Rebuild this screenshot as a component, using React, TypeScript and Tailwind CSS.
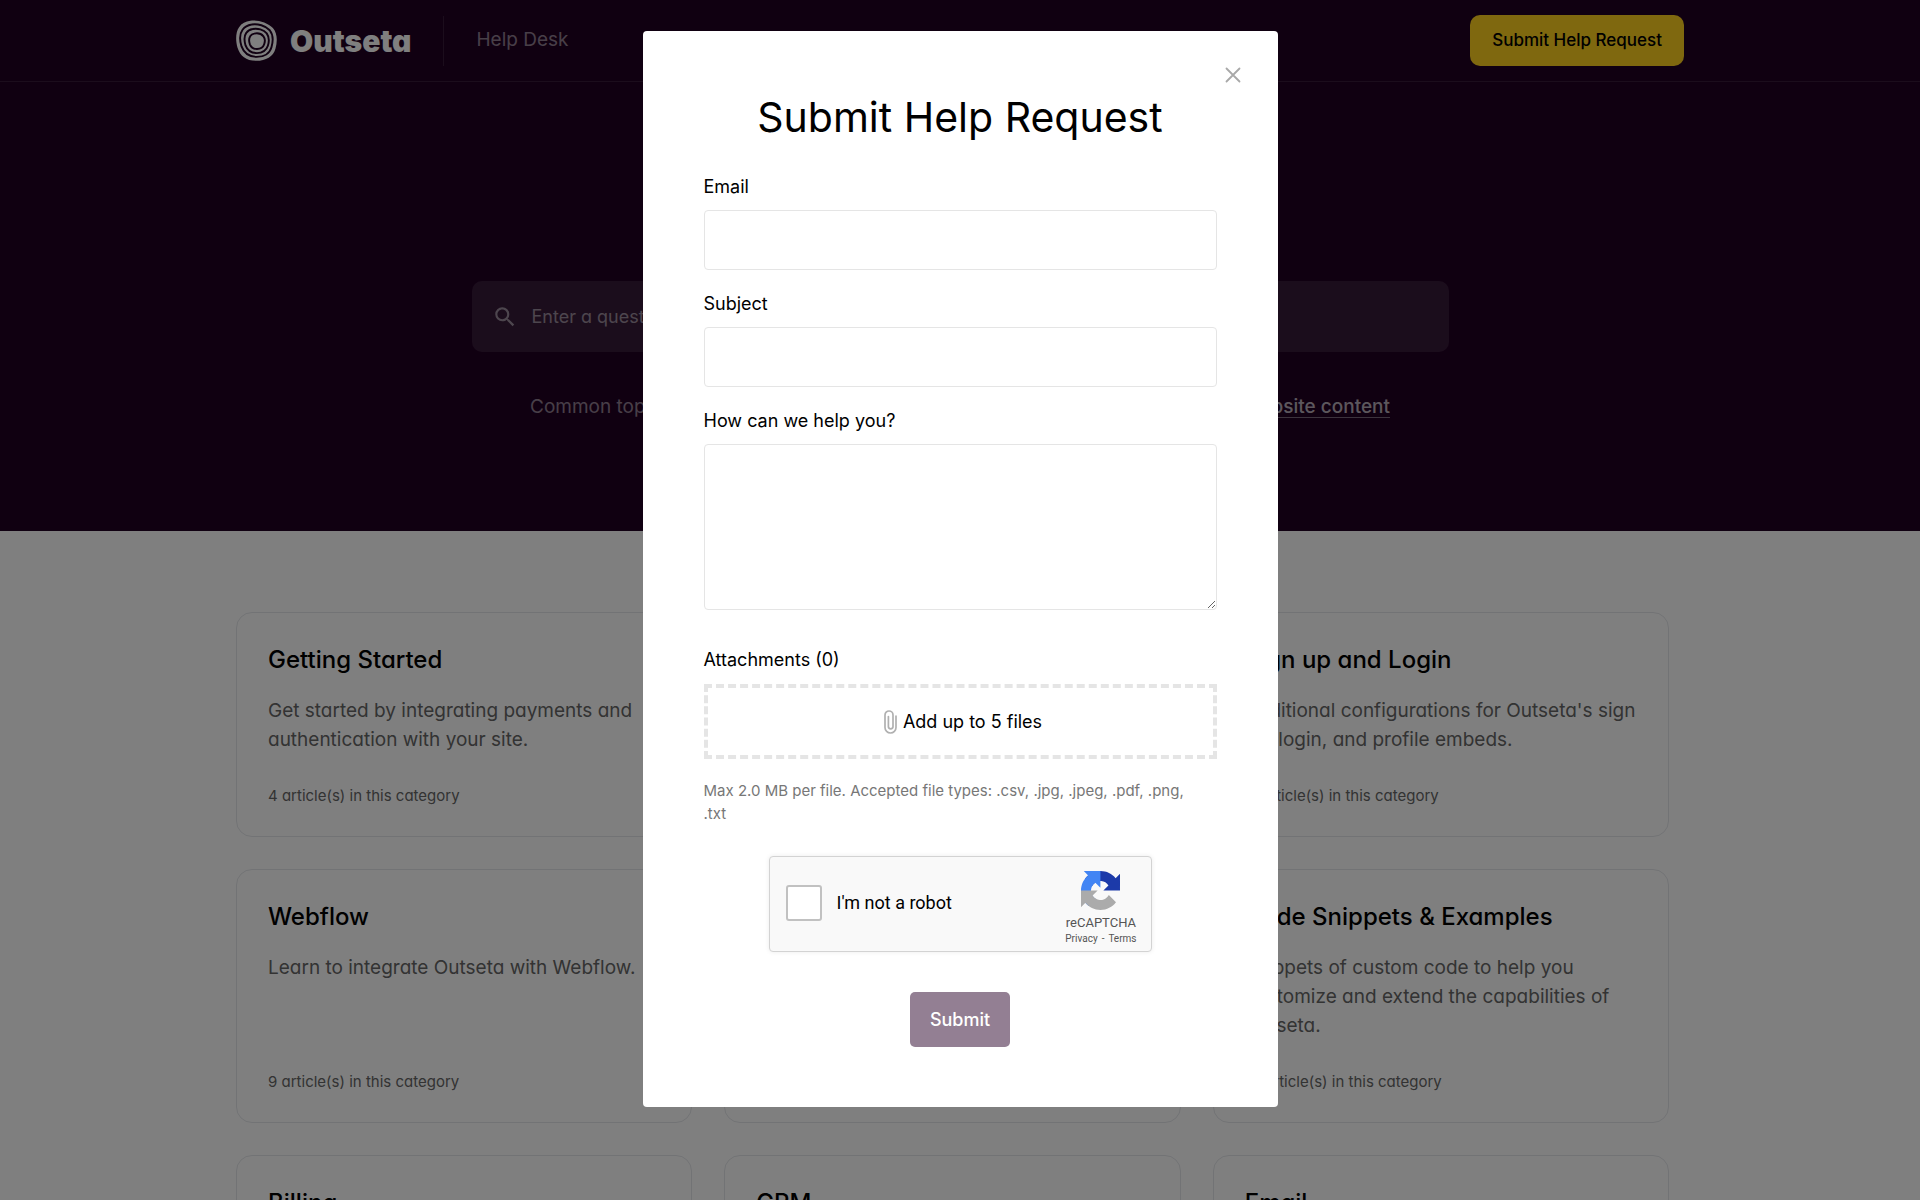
import { MdSearch } from 'react-icons/md';

interface Category {
  title: string;
  description: string;
  articles: number;
}

const categories: Category[] = [
  {
    title: 'Getting Started',
    description: 'Get started by integrating payments and authentication with your site.',
    articles: 4,
  },
  {
    title: 'Integrations',
    description: 'Connect Outseta with other tools.',
    articles: 8,
  },
  {
    title: 'Sign up and Login',
    description: "Additional configurations for Outseta's sign up, login, and profile embeds.",
    articles: 11,
  },
  {
    title: 'Webflow',
    description: 'Learn to integrate Outseta with Webflow.',
    articles: 9,
  },
  {
    title: 'WordPress',
    description: 'Learn to integrate Outseta with WordPress.',
    articles: 5,
  },
  {
    title: 'Code Snippets & Examples',
    description: 'Snippets of custom code to help you customize and extend the capabilities of Outseta.',
    articles: 21,
  },
  { title: 'Billing', description: 'Plans, invoices and payments.', articles: 12 },
  { title: 'CRM', description: 'Manage people, accounts and deals.', articles: 7 },
  { title: 'Email', description: 'Broadcasts, drip campaigns and lists.', articles: 10 },
];

function LogoMark() {
  return (
    <svg viewBox="0 0 40 40" className="size-[41px]" aria-hidden="true">
      <path
        d="M14 .8C20-.7 31 2.300 36 7.800C40.500 13 40.500 21 38.500 28C36.500 35.500 29 39.800 20 39.800C10 39.800 4 35 1.500 27C-.5 20-.5 12 3 7C5.500 3.300 9.500 1.500 14 .8Z"
        fill="#fff"
      />
      <g fill="none" stroke="#210023" strokeWidth="1.900">
        <path d="M15.200 4.400C21 3.300 29 5.600 32.900 10C36.300 14.300 36.200 21 34.600 26.500C32.900 32.500 27.200 36 20.200 36C12.400 36 7.600 32 5.400 25.800C3.600 20 3.600 13.300 6.400 9.500C8.500 6.600 11.600 5 15.200 4.400Z" />
        <path d="M16.300 8.800C21 7.800 27 9.300 30 13C32.400 16.400 32.400 21 31.100 25.200C29.500 30 25.700 32.300 20.400 32.300C14.300 32.300 11 29.400 9.300 24.800C7.900 20 8 15.400 10 12.600C11.500 10.300 13.600 9.200 16.300 8.800Z" />
        <path d="M17.700 13.300C21 12.600 24.800 13.500 26.800 15.900C28.500 18.100 28.400 21.100 27.500 23.700C26.500 26.800 23.900 28.300 20.500 28.300C16.900 28.300 14.600 26.500 13.500 23.700C12.500 20.700 12.700 17.600 14 15.600C14.900 14.200 16.100 13.600 17.700 13.300Z" />
      </g>
    </svg>
  );
}

function PaperclipIcon() {
  return (
    <svg
      viewBox="0 0 13 24"
      className="h-6 w-[13px]"
      fill="none"
      stroke="#b0b0b0"
      strokeWidth="1.700"
      strokeLinecap="round"
      aria-hidden="true"
    >
      <path d="M12 6v11.500a5.500 5.500 0 0 1-11 0V5a4 4 0 0 1 8 0v11.500a2.300 2.300 0 0 1-4.600 0V6.500" />
    </svg>
  );
}

function CloseIcon() {
  return (
    <svg viewBox="0 0 16 16" className="size-4" fill="none" stroke="#a8a8a8" strokeWidth="1.800" strokeLinecap="round" aria-hidden="true">
      <path d="M1.500 1.500l13 13M14.500 1.500l-13 13" />
    </svg>
  );
}

function RecaptchaLogo() {
  return (
    <svg viewBox="0 0 64 64" className="size-[39px]" aria-hidden="true">
      <path
        fill="#1c3aa9"
        d="M64 31.955l-.033-1.370V4.687l-7.160 7.160C50.948 4.674 42.033.093 32.050.093c-10.400 0-19.622 4.960-25.458 12.640l11.736 11.860a15.550 15.550 0 0 1 4.754-5.334c2.050-1.600 4.952-2.906 8.968-2.906.485 0 .860.057 1.135.163 4.976.393 9.288 3.140 11.828 7.124l-8.307 8.307L64 31.953"
      />
      <path
        fill="#4285f4"
        d="M31.862.094l-1.370.033H4.594l7.160 7.160C4.580 13.147 0 22.060 0 32.046c0 10.400 4.960 19.622 12.640 25.458L24.500 45.768a15.550 15.550 0 0 1-5.334-4.754c-1.600-2.050-2.906-4.952-2.906-8.968 0-.485.057-.860.163-1.135.393-4.976 3.140-9.288 7.124-11.828l8.307 8.307L31.860.095"
      />
      <path
        fill="#ababab"
        d="M.001 32.045l.033 1.370v25.898l7.160-7.160c5.860 7.173 14.774 11.754 24.760 11.754 10.400 0 19.622-4.960 25.458-12.640l-11.736-11.860a15.550 15.550 0 0 1-4.754 5.334c-2.050 1.600-4.952 2.906-8.968 2.906-.485 0-.860-.057-1.135-.163-4.976-.393-9.288-3.140-11.828-7.124l8.307-8.307c-10.522.040-22.400.066-27.295-.005"
      />
    </svg>
  );
}

function Header() {
  return (
    <header className="border-b border-white/10">
      <div className="mx-auto flex max-w-[1448px] items-center justify-between py-[15px]">
        <div className="flex items-center">
          <a href="#" className="flex items-center gap-[13px] text-white">
            <LogoMark />
            <span className="text-3xl leading-8 font-black">Outseta</span>
          </a>
          <span className="ml-8 h-[50px] border-l border-white/10" />
          <a href="#" className="ml-8 text-[19px] text-white/50">
            Help Desk
          </a>
        </div>
        <button type="button" className="rounded-[10px] bg-[#ffd01f] px-[22px] py-3 text-[17px] leading-[27px] font-medium text-black">
          Submit Help Request
        </button>
      </div>
    </header>
  );
}

function Hero() {
  return (
    <section className="flex flex-col items-center pt-[104px] pb-[109px]">
      <h1 className="text-5xl leading-[56px] font-medium text-white">How can we help?</h1>
      <label className="mt-[39px] flex h-[71px] w-full max-w-[977px] items-center gap-[14px] rounded-[10px] bg-white/10 px-5">
        <MdSearch className="size-[26px] text-white/50" />
        <input
          type="search"
          aria-label="Search"
          placeholder="Enter a question"
          className="flex-1 bg-transparent text-lg text-white outline-none placeholder:text-white/50"
        />
      </label>
      <p className="mt-10 flex w-full max-w-[860px] justify-between text-[19px] leading-[30px] text-white/50">
        <span>Common topics:</span>
        <a href="#" className="font-medium text-white/70 underline decoration-white/40 decoration-1 underline-offset-4">
          Protecting website content
        </a>
      </p>
    </section>
  );
}

function CategoryCard({ title, description, articles }: Category) {
  return (
    <a href="#" className="flex min-h-[225px] flex-col rounded-2xl border border-gray-200 px-[31px] pt-[31px] pb-7">
      <h2 className="text-2xl leading-8 font-medium text-black">{title}</h2>
      <p className="mt-5 text-[19px] leading-[29px] text-[#666]">{description}</p>
      <p className="mt-auto pt-[30px] text-[15px] leading-6 text-[#666]">{articles} article(s) in this category</p>
    </a>
  );
}

function Captcha() {
  return (
    <div className="mx-auto flex w-[383px] items-start justify-between rounded border border-[#d3d3d3] bg-[#f9f9f9] pt-[14px] pr-[14px] pb-[6px] pl-4 font-[Roboto,sans-serif] shadow-[0_0_5px_rgba(0,0,0,0.08)]">
      <label className="mt-[14px] flex items-center gap-[15px] text-lg leading-7 text-black">
        <input type="checkbox" className="size-[36px] appearance-none rounded-[3px] border-2 border-[#c1c1c1] bg-white" />
        I'm not a robot
      </label>
      <div className="flex flex-col items-center text-[#555]">
        <RecaptchaLogo />
        <span className="mt-[3px] text-[13px] leading-5">reCAPTCHA</span>
        <span className="flex gap-1 text-[10px] leading-3">
          <a href="#">Privacy</a>-<a href="#">Terms</a>
        </span>
      </div>
    </div>
  );
}

function RequestModal() {
  return (
    <div className="fixed inset-0 overflow-hidden bg-black/50 pt-[31px]">
      <div
        role="dialog"
        aria-labelledby="modal-title"
        className="relative mx-auto w-full max-w-[635px] rounded bg-white px-[61px] py-[60px] text-black [font-feature-settings:normal]"
      >
        <button type="button" aria-label="Close" className="absolute top-9 right-[37px]">
          <CloseIcon />
        </button>
        <h2 id="modal-title" className="text-center text-[41px] leading-[52px]">
          Submit Help Request
        </h2>
        <form className="mt-[30px] flex flex-col text-lg leading-7">
          <label htmlFor="email">Email</label>
          <input id="email" type="email" className="mt-[9px] h-[60px] rounded border border-[#e5e5e5] px-4" />
          <label htmlFor="subject" className="mt-5">
            Subject
          </label>
          <input id="subject" type="text" className="mt-[9px] h-[60px] rounded border border-[#e5e5e5] px-4" />
          <label htmlFor="message" className="mt-5">
            How can we help you?
          </label>
          <textarea id="message" className="mt-[9px] h-[166px] rounded border border-[#e5e5e5] px-4 py-3" />
          <span className="mt-9">Attachments (0)</span>
          <button
            type="button"
            className="mt-[10px] flex h-[75px] items-center justify-center gap-[6px] border-4 border-dashed border-[#e5e5e5] pl-[6px]"
          >
            <PaperclipIcon />
            Add up to 5 files
          </button>
          <p className="mt-5 mb-[31px] pr-4 text-[15px] leading-[23px] text-[#777]">
            Max 2.0 MB per file. Accepted file types: .csv, .jpg, .jpeg, .pdf, .png, .txt
          </p>
          <Captcha />
          <button type="submit" className="mx-auto mt-10 h-[55px] rounded-[5px] bg-[#937f93] px-5 font-medium text-white">
            Submit
          </button>
        </form>
      </div>
    </div>
  );
}

export default function App() {
  return (
    <div className="h-screen overflow-hidden bg-white font-[Inter,sans-serif] [font-feature-settings:'cv11']">
      <div className="bg-[#210023]">
        <Header />
        <Hero />
      </div>
      <main className="mx-auto grid max-w-[1448px] grid-cols-3 gap-8 pt-[81px] pr-[15px]">
        {categories.map((category) => (
          <CategoryCard key={category.title} {...category} />
        ))}
      </main>
      <RequestModal />
    </div>
  );
}
